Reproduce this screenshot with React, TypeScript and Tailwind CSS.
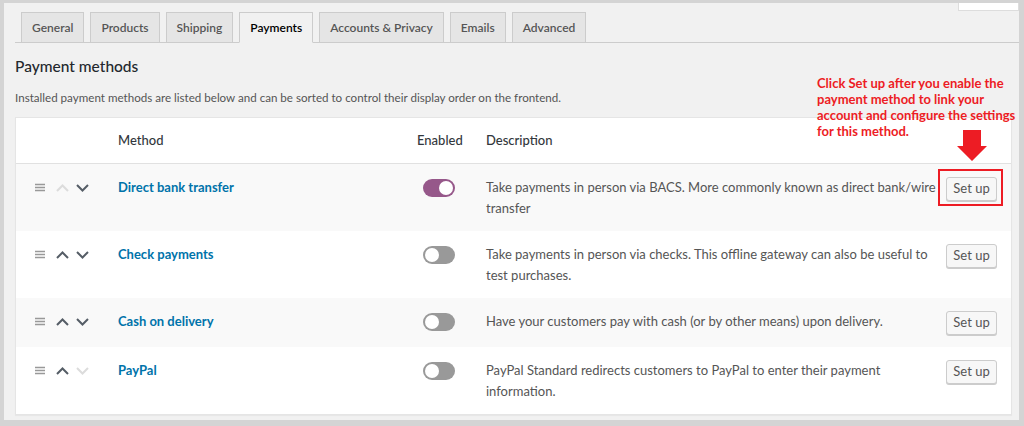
import React from 'react';

interface Method {
  name: string;
  desc: string;
  enabled: boolean;
  canUp: boolean;
  canDown: boolean;
}

const methods: Method[] = [
  {
    name: 'Direct bank transfer',
    desc: 'Take payments in person via BACS. More commonly known as direct bank/wire transfer',
    enabled: true,
    canUp: false,
    canDown: true,
  },
  {
    name: 'Check payments',
    desc: 'Take payments in person via checks. This offline gateway can also be useful to test purchases.',
    enabled: false,
    canUp: true,
    canDown: true,
  },
  {
    name: 'Cash on delivery',
    desc: 'Have your customers pay with cash (or by other means) upon delivery.',
    enabled: false,
    canUp: true,
    canDown: true,
  },
  {
    name: 'PayPal',
    desc: 'PayPal Standard redirects customers to PayPal to enter their payment information.',
    enabled: false,
    canUp: true,
    canDown: false,
  },
];

const tabs = ['General', 'Products', 'Shipping', 'Payments', 'Accounts & Privacy', 'Emails', 'Advanced'];

function Chevron({ up, active }: { up: boolean; active: boolean }) {
  return (
    <svg width="13" height="8" viewBox="0 0 13 8">
      <path
        d={up ? 'M1 7 L6.5 1.5 L12 7' : 'M1 1 L6.5 6.5 L12 1'}
        fill="none"
        stroke={active ? '#555d66' : '#dcdcdc'}
        strokeWidth="2"
      />
    </svg>
  );
}

function Toggle({ on }: { on: boolean }) {
  return (
    <div
      className={`mt-[2px] ml-[6px] w-[32px] h-[18px] rounded-full flex items-center px-[2px] ${
        on ? 'bg-[#96588a] justify-end' : 'bg-[#999] justify-start'
      }`}
    >
      <div className="w-[14px] h-[14px] rounded-full bg-white" />
    </div>
  );
}

export default function App() {
  return (
    <div className="relative w-[1024px] h-[426px] bg-[#d4d4d4] pt-[3px] pl-[4px] pr-[5px] pb-[6px] font-['Lato',sans-serif]">
      <div className="h-full bg-[#f1f1f1] flex flex-col">
        <div className="flex justify-end h-[8px]">
          <div className="w-[61px] h-[8px] bg-white border border-t-0 border-[#ddd]" />
        </div>

        {/* tabs */}
        <div className="mt-[1px] ml-[11px] pl-[6px] flex border-b border-[#ccc]">
          {tabs.map((t) => {
            const active = t === 'Payments';
            return (
              <div
                key={t}
                className={`mr-[6px] -mb-px h-[31px] px-[10px] flex items-center border text-[12px] font-semibold ${
                  active
                    ? 'bg-[#f1f1f1] text-black border-[#ccc] border-b-[#f1f1f1]'
                    : 'bg-[#e5e5e5] text-[#555] border-[#ccc]'
                }`}
              >
                {t}
              </div>
            );
          })}
        </div>

        <h2 className="mt-[12px] ml-[11px] text-[15.5px] leading-[22px] text-[#23282d] font-medium">
          Payment methods
        </h2>
        <p className="mt-[12px] ml-[11px] text-[11.6px] leading-[18px] text-[#555]">
          Installed payment methods are listed below and can be sorted to control their display order on the frontend.
        </p>

        {/* table */}
        <div className="mt-[10px] ml-[11px] w-[997px] bg-white border border-[#e5e5e5] shadow-[0_1px_1px_rgba(0,0,0,0.04)]">
          <div className="grid grid-cols-[102px_299px_69px_456px_1fr] py-[12px] border-b border-[#e1e1e1] text-[13px] leading-[21px] text-[#32373c] font-medium">
            <div />
            <div>Method</div>
            <div>Enabled</div>
            <div>Description</div>
            <div />
          </div>
          {methods.map((m, i) => (
            <div
              key={m.name}
              className={`grid grid-cols-[102px_299px_69px_456px_1fr] pt-[13px] pb-[12px] ${
                i % 2 === 0 ? 'bg-[#f9f9f9]' : 'bg-white'
              }`}
            >
              <div className="pl-[19px] h-[21px] flex items-center">
                <svg width="10" height="9" viewBox="0 0 10 9">
                  <path d="M0 1.5h10M0 4.5h10M0 7.5h10" stroke="#999" strokeWidth="1.4" />
                </svg>
                <span className="ml-[11px] flex">
                  <Chevron up active={m.canUp} />
                </span>
                <span className="ml-[7px] flex">
                  <Chevron up={false} active={m.canDown} />
                </span>
              </div>
              <div className="text-[13px] leading-[21px] font-bold text-[#0073aa]">{m.name}</div>
              <div>
                <Toggle on={m.enabled} />
              </div>
              <div className="text-[13px] leading-[21px] text-[#555]">{m.desc}</div>
              <div className="pl-[4px]">
                <button className="w-[51px] h-[24px] flex items-center justify-center bg-[#f7f7f7] border border-[#ccc] rounded-[3px] shadow-[0_1px_0_#ccc] text-[13px] text-[#555]">
                  Set up
                </button>
              </div>
            </div>
          ))}
        </div>
      </div>

      {/* annotation overlay */}
      <div className="absolute left-[817px] top-[75px] text-[13px] leading-[16px] font-bold text-[#ed1c24] whitespace-nowrap">
        Click Set up after you enable the
        <br />
        payment method to link your
        <br />
        account and configure the settings
        <br />
        for this method.
      </div>
      <svg className="absolute left-[957px] top-[130px]" width="30" height="31" viewBox="0 0 30 31">
        <path d="M6 0 H24 V16 H30 L15 31 L0 16 H6 Z" fill="#ed1c24" />
      </svg>
      <div className="absolute left-[938px] top-[169px] w-[65px] h-[37px] border-2 border-[#ed1c24]" />
    </div>
  );
}
